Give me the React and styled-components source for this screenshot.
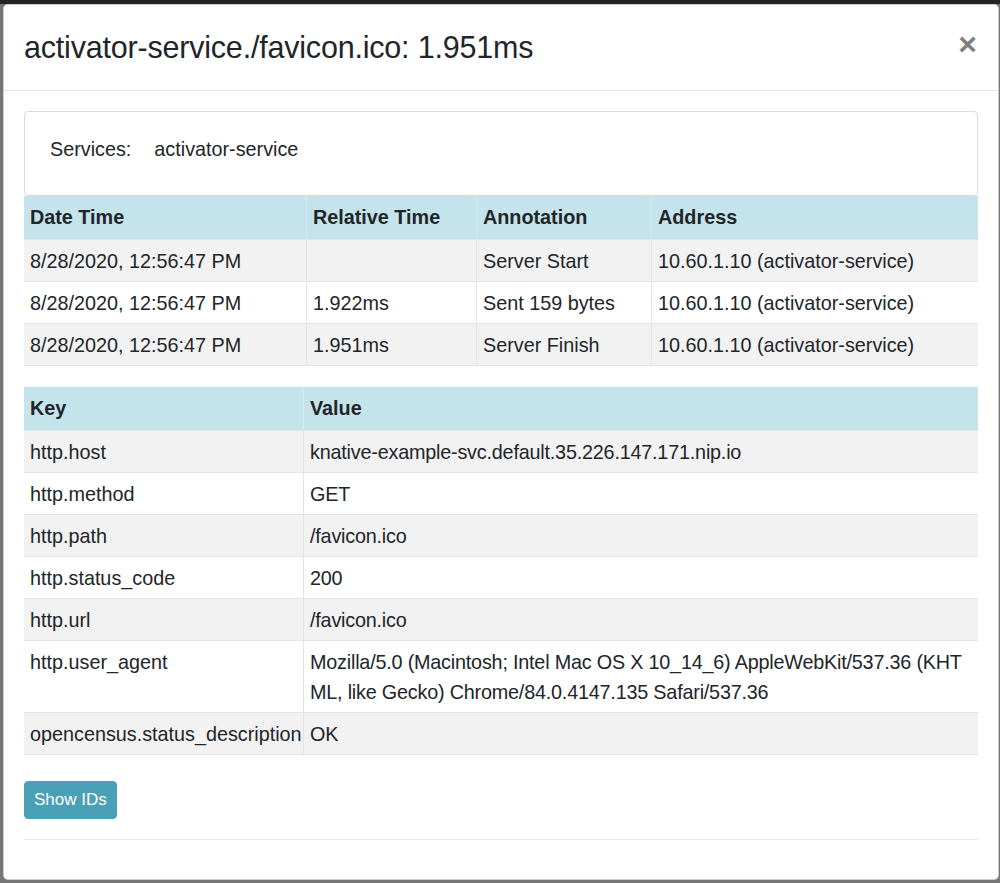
import React from "react";
import styled, { createGlobalStyle } from "styled-components";

const GlobalStyle = createGlobalStyle`
  html, body {
    margin: 0;
    padding: 0;
  }
  body {
    font-family: "Liberation Sans", Arial, sans-serif;
    color: #212529;
    background: linear-gradient(#232427 0, #232427 4px, #767676 4px);
    height: 883px;
    overflow: hidden;
  }
`;

const Backdrop = styled.div`
  padding: 4px 3px 0 3px;
`;

const ModalBox = styled.div`
  width: 996px;
  height: 876px;
  box-sizing: border-box;
  background: #fff;
  border-radius: 5px;
  border: 1px solid rgba(0, 0, 0, 0.2);
  display: flex;
  flex-direction: column;
`;

const ModalHeader = styled.div`
  display: flex;
  align-items: center;
  justify-content: space-between;
  height: 86px;
  box-sizing: border-box;
  padding: 0 20px;
  border-bottom: 1px solid #e6e6e6;
`;

const Title = styled.h4`
  margin: 0;
  font-size: 30.5px;
  font-weight: 500;
  letter-spacing: -0.2px;
`;

const CloseButton = styled.button`
  border: none;
  background: none;
  padding: 0;
  font-family: "Liberation Sans", Arial, sans-serif;
  font-size: 32px;
  font-weight: 700;
  line-height: 1;
  color: #000;
  opacity: 0.5;
  margin-right: 1px;
  margin-top: -7px;
  cursor: pointer;
`;

const ModalBody = styled.div`
  padding: 20px 20px 0 20px;
`;

const ServiceCard = styled.div`
  border: 1px solid #dadada;
  border-radius: 4px;
  height: 85px;
  box-sizing: border-box;
  padding: 0 25px;
  display: flex;
  align-items: center;
  font-size: 19.8px;
  padding-bottom: 8px;
`;

const ServiceLabel = styled.span`
  margin-right: 23px;
`;

const Table = styled.table`
  width: 100%;
  table-layout: fixed;
  border-collapse: collapse;
  font-size: 19.8px;
  margin-bottom: ${(p) => (p.$last ? "0" : "21px")};
  border-bottom: 1px solid #e2e4e6;
`;

const HeadCell = styled.th`
  background: #c5e3ea;
  text-align: left;
  font-weight: 700;
  padding: 6px 6px 7px 6px;
  line-height: 30px;
  border-left: 1px solid #d4eaef;
  width: ${(p) => p.$w || "auto"};
  &:first-child {
    border-left: none;
  }
`;

const Row = styled.tr`
  background: ${(p) => (p.$odd ? "#f2f2f2" : "#fff")};
`;

const Cell = styled.td`
  padding: 6px 6px 5px 6px;
  line-height: 30px;
  vertical-align: top;
  border-top: 1px solid #e2e4e6;
  border-left: 1px solid #e2e4e6;
  white-space: ${(p) => (p.$nowrap ? "nowrap" : "normal")};
  word-break: ${(p) => (p.$breakAll ? "break-all" : "normal")};
  letter-spacing: ${(p) => (p.$breakAll ? "-0.2px" : "normal")};
  &:first-child {
    border-left: none;
  }
`;

const ShowIdsButton = styled.button`
  margin-top: 26px;
  height: 38px;
  padding: 0 9px;
  background: #4aa0b6;
  border: 1px solid #4aa0b6;
  border-radius: 4px;
  color: #fff;
  font-family: "Liberation Sans", Arial, sans-serif;
  font-size: 17px;
  cursor: pointer;
`;

const Divider = styled.hr`
  margin: 20px 0 0 0;
  border: none;
  border-top: 1px solid #e6e6e6;
`;

const annotations = [
  { time: "8/28/2020, 12:56:47 PM", rel: "", value: "Server Start", addr: "10.60.1.10 (activator-service)" },
  { time: "8/28/2020, 12:56:47 PM", rel: "1.922ms", value: "Sent 159 bytes", addr: "10.60.1.10 (activator-service)" },
  { time: "8/28/2020, 12:56:47 PM", rel: "1.951ms", value: "Server Finish", addr: "10.60.1.10 (activator-service)" },
];

const tags = [
  ["http.host", "knative-example-svc.default.35.226.147.171.nip.io"],
  ["http.method", "GET"],
  ["http.path", "/favicon.ico"],
  ["http.status_code", "200"],
  ["http.url", "/favicon.ico"],
  [
    "http.user_agent",
    "Mozilla/5.0 (Macintosh; Intel Mac OS X 10_14_6) AppleWebKit/537.36 (KHTML, like Gecko) Chrome/84.0.4147.135 Safari/537.36",
  ],
  ["opencensus.status_description", "OK"],
];

const App = () => {
  return (
    <Backdrop>
      <GlobalStyle />
      <ModalBox>
        <ModalHeader>
          <Title>activator-service./favicon.ico: 1.951ms</Title>
          <CloseButton aria-label="Close">×</CloseButton>
        </ModalHeader>
        <ModalBody>
          <ServiceCard>
            <ServiceLabel>Services:</ServiceLabel>
            <span>activator-service</span>
          </ServiceCard>

          <Table>
            <thead>
              <tr>
                <HeadCell $w="270px">Date Time</HeadCell>
                <HeadCell $w="157px">Relative Time</HeadCell>
                <HeadCell $w="162px">Annotation</HeadCell>
                <HeadCell>Address</HeadCell>
              </tr>
            </thead>
            <tbody>
              {annotations.map((a, i) => (
                <Row key={i} $odd={i % 2 === 0}>
                  <Cell>{a.time}</Cell>
                  <Cell>{a.rel}</Cell>
                  <Cell>{a.value}</Cell>
                  <Cell>{a.addr}</Cell>
                </Row>
              ))}
            </tbody>
          </Table>

          <Table $last>
            <thead>
              <tr>
                <HeadCell $w="267px">Key</HeadCell>
                <HeadCell>Value</HeadCell>
              </tr>
            </thead>
            <tbody>
              {tags.map(([k, v], i) => (
                <Row key={k} $odd={i % 2 === 0}>
                  <Cell $nowrap>{k}</Cell>
                  <Cell $breakAll>{v}</Cell>
                </Row>
              ))}
            </tbody>
          </Table>

          <ShowIdsButton>Show IDs</ShowIdsButton>
          <Divider />
        </ModalBody>
      </ModalBox>
    </Backdrop>
  );
};

export default App;
